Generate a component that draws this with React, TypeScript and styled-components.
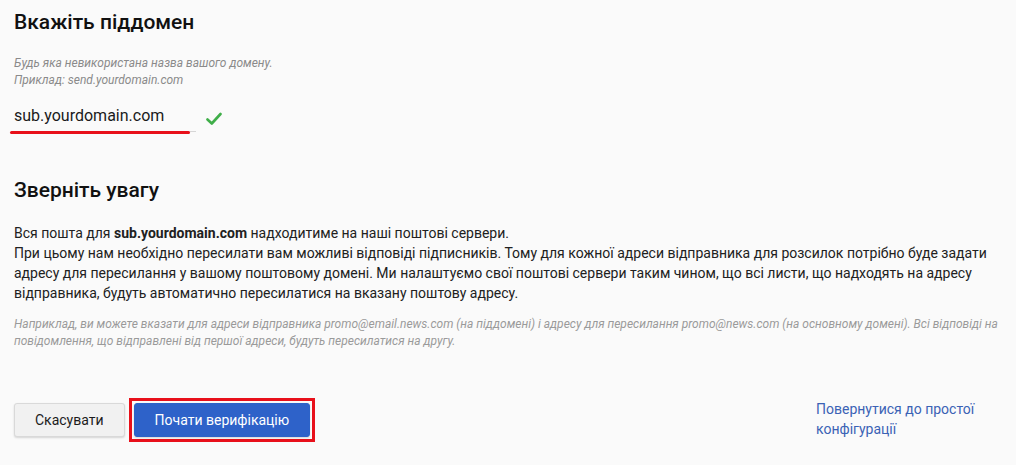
import React, { useState } from 'react';
import styled, { createGlobalStyle } from 'styled-components';

const GlobalStyle = createGlobalStyle`
    html, body {
        margin: 0;
        padding: 0;
        background: #fafafa;
    }
    body {
        font-family: Roboto, 'Liberation Sans', Arial, sans-serif;
        color: #212121;
    }
`;

const Page = styled.div`
    width: 1016px;
    height: 465px;
    box-sizing: border-box;
    padding: 9px 14px 0 14px;
    display: flex;
    flex-direction: column;
    overflow: hidden;
`;

const Heading = styled.h2<{ $top?: number }>`
    margin: ${(p) => p.$top ?? 0}px 0 0 0;
    font-size: 21px;
    line-height: 26px;
    font-weight: 500;
    color: #111;
`;

const Hint = styled.p`
    margin: 20px 0 0 0;
    font-size: 12px;
    line-height: 17px;
    font-style: italic;
    color: #8a8a8a;
`;

const FieldRow = styled.div`
    display: flex;
    align-items: center;
    gap: 10px;
    margin-top: 14px;
`;

const FieldWrap = styled.div`
    position: relative;
    width: 182px;
`;

const Field = styled.input`
    width: 100%;
    box-sizing: border-box;
    border: none;
    border-bottom: 1px solid #d6d6d6;
    background: transparent;
    padding: 3px 0 6px 0;
    font-family: inherit;
    font-size: 16px;
    color: #1a1a1a;
    outline: none;
`;

const RedStroke = styled.div`
    position: absolute;
    left: -4px;
    right: 6px;
    bottom: -2px;
    height: 3px;
    border-radius: 2px;
    background: #e8101a;
`;

const Check = styled.svg`
    width: 16px;
    height: 14px;
    margin-top: 2px;
`;

const Body = styled.p`
    margin: 20px 0 0 0;
    font-size: 14px;
    line-height: 20px;
    color: #212121;

    b {
        font-weight: 700;
    }
`;

const Example = styled.p`
    margin: 13px 0 0 0;
    font-size: 12px;
    line-height: 17px;
    font-style: italic;
    color: #9a9a9a;
`;

const Actions = styled.div`
    display: flex;
    align-items: flex-start;
    margin-top: 48px;
`;

const Buttons = styled.div`
    display: flex;
    align-items: center;
    gap: 4px;
    flex: 1;
`;

const Button = styled.button<{ $primary?: boolean }>`
    height: 34px;
    box-sizing: border-box;
    padding: 0 20px;
    border-radius: 3px;
    font-family: inherit;
    font-size: 14px;
    cursor: pointer;
    border: 1px solid ${(p) => (p.$primary ? '#2d63c8' : '#d9d9d9')};
    background: ${(p) => (p.$primary ? '#2e62c9' : '#f1f1f1')};
    color: ${(p) => (p.$primary ? '#ffffff' : '#1c1c1c')};
    box-shadow: 0 1px 2px rgba(0, 0, 0, 0.15);
`;

const Highlight = styled.div`
    border: 3px solid #e8101a;
    padding: 2px;
    display: flex;
`;

const BackLink = styled.a`
    width: 170px;
    margin-right: 16px;
    margin-top: 1px;
    font-size: 14px;
    line-height: 20px;
    color: #3b62b5;
    text-decoration: none;
    cursor: pointer;
`;

export default function App() {
    const [subdomain, setSubdomain] = useState('sub.yourdomain.com');

    return (
        <>
            <GlobalStyle />
            <Page>
                <Heading>Вкажіть піддомен</Heading>
                <Hint>
                    Будь яка невикористана назва вашого домену.
                    <br />
                    Приклад: send.yourdomain.com
                </Hint>
                <FieldRow>
                    <FieldWrap>
                        <Field value={subdomain} onChange={(e) => setSubdomain(e.target.value)} />
                        <RedStroke />
                    </FieldWrap>
                    <Check viewBox="0 0 16 14">
                        <path d="M1.5 7.5 L5.8 11.5 L14.5 2" fill="none" stroke="#3fae49" strokeWidth="2.6" strokeLinecap="round" strokeLinejoin="round" />
                    </Check>
                </FieldRow>

                <Heading $top={45}>Зверніть увагу</Heading>
                <Body>
                    Вся пошта для <b>{subdomain}</b> надходитиме на наші поштові сервери.
                    <br />
                    При цьому нам необхідно пересилати вам можливі відповіді підписників. Тому для кожної адреси відправника для розсилок потрібно буде задати
                    адресу для пересилання у вашому поштовому домені. Ми налаштуємо свої поштові сервери таким чином, що всі листи, що надходять на адресу
                    відправника, будуть автоматично пересилатися на вказану поштову адресу.
                </Body>
                <Example>
                    Наприклад, ви можете вказати для адреси відправника promo@email.news.com (на піддомені) і адресу для пересилання promo@news.com (на основному домені). Всі відповіді на
                    повідомлення, що відправлені від першої адреси, будуть пересилатися на другу.
                </Example>

                <Actions>
                    <Buttons>
                        <Button>Скасувати</Button>
                        <Highlight>
                            <Button $primary>Почати верифікацію</Button>
                        </Highlight>
                    </Buttons>
                    <BackLink>Повернутися до простої конфігурації</BackLink>
                </Actions>
            </Page>
        </>
    );
}
